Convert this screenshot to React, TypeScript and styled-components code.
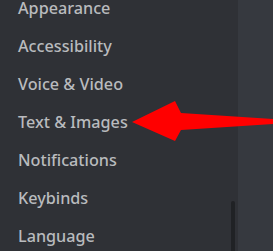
import React from "react";
import styled, { createGlobalStyle } from "styled-components";

const Global = createGlobalStyle`
  html, body { margin: 0; padding: 0; background: #36393f; overflow: hidden; }
  #root { width: 273px; height: 251px; }
`;

const Page = styled.div`
  position: relative;
  display: flex;
  width: 273px;
  height: 251px;
  overflow: hidden;
  font-family: "Noto Sans", "Open Sans", sans-serif;
`;

const Sidebar = styled.nav`
  position: relative;
  width: 238px;
  flex: none;
  background: #2f3136;
  overflow: hidden;
`;

const List = styled.ul`
  list-style: none;
  margin: -11px 0 0 0;
  padding: 0;
`;

const Item = styled.li`
  height: 38px;
  display: flex;
  align-items: center;
  padding-left: 18px;
  font-size: 16.2px;
  font-weight: 500;
  color: #b9bbbe;
  white-space: nowrap;
`;

const Thumb = styled.div`
  position: absolute;
  left: 231px;
  top: 201px;
  width: 4px;
  height: 60px;
  border-radius: 2px;
  background: #202225;
`;

const Content = styled.main`
  flex: 1;
  background: #36393f;
`;

const Arrow = styled.svg`
  position: absolute;
  left: 0;
  top: 0;
  pointer-events: none;
`;

const items = [
  "Appearance",
  "Accessibility",
  "Voice & Video",
  "Text & Images",
  "Notifications",
  "Keybinds",
  "Language",
];

export default function App() {
  return (
    <>
      <Global />
      <Page>
        <Sidebar>
          <List>
            {items.map((t) => (
              <Item key={t}>{t}</Item>
            ))}
          </List>
          <Thumb />
        </Sidebar>
        <Content />
        <Arrow width="273" height="251" viewBox="0 0 273 251">
          <polygon
            points="132,122 175,101 181,113 273,119 273,124 181,130 175,141"
            fill="#ff0000"
          />
        </Arrow>
      </Page>
    </>
  );
}
